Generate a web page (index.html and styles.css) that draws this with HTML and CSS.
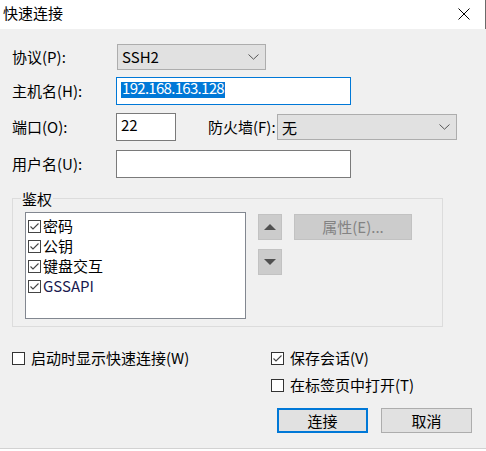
FILE: index.html
```html
<!DOCTYPE html>
<html lang="zh-CN">
<head>
<meta charset="utf-8">
<title>快速连接</title>
<link rel="stylesheet" href="styles.css">
</head>
<body>
<div class="window">
  <div class="titlebar">
    <span class="title">快速连接</span>
    <svg class="close" width="12" height="12" viewBox="0 0 12 12"><path d="M0.5 0.5 L11.5 11.5 M11.5 0.5 L0.5 11.5" stroke="#000" stroke-width="1" fill="none"/></svg>
  </div>
  <div class="content">
    <div class="row r1">
      <span class="lbl">协议(P):</span>
      <div class="combo combo-proto"><span>SSH2</span><svg class="chev" width="11" height="6" viewBox="0 0 11 6"><path d="M0.5 0.5 L5.5 5.2 L10.5 0.5" stroke="#555" stroke-width="1" fill="none"/></svg></div>
    </div>
    <div class="row r2">
      <span class="lbl">主机名(H):</span>
      <div class="edit edit-host"><span class="sel">192.168.163.128</span></div>
    </div>
    <div class="row r3">
      <span class="lbl">端口(O):</span>
      <div class="edit edit-port">22</div>
      <span class="fw-lbl">防火墙(F):</span>
      <div class="combo combo-fw"><span>无</span><svg class="chev" width="11" height="6" viewBox="0 0 11 6"><path d="M0.5 0.5 L5.5 5.2 L10.5 0.5" stroke="#555" stroke-width="1" fill="none"/></svg></div>
    </div>
    <div class="row r4">
      <span class="lbl">用户名(U):</span>
      <div class="edit edit-user"></div>
    </div>
    <fieldset class="group">
      <legend>鉴权</legend>
      <div class="group-body">
        <div class="listbox">
          <div class="item"><svg class="cb" width="13" height="13" viewBox="0 0 13 13"><rect x="0.5" y="0.5" width="12" height="12" fill="#fff" stroke="#444"/><path d="M2.5 6.5 L5 9 L10.5 3.5" stroke="#444" stroke-width="1.1" fill="none"/></svg><span>密码</span></div>
          <div class="item"><svg class="cb" width="13" height="13" viewBox="0 0 13 13"><rect x="0.5" y="0.5" width="12" height="12" fill="#fff" stroke="#444"/><path d="M2.5 6.5 L5 9 L10.5 3.5" stroke="#444" stroke-width="1.1" fill="none"/></svg><span>公钥</span></div>
          <div class="item"><svg class="cb" width="13" height="13" viewBox="0 0 13 13"><rect x="0.5" y="0.5" width="12" height="12" fill="#fff" stroke="#444"/><path d="M2.5 6.5 L5 9 L10.5 3.5" stroke="#444" stroke-width="1.1" fill="none"/></svg><span>键盘交互</span></div>
          <div class="item"><svg class="cb" width="13" height="13" viewBox="0 0 13 13"><rect x="0.5" y="0.5" width="12" height="12" fill="#fff" stroke="#444"/><path d="M2.5 6.5 L5 9 L10.5 3.5" stroke="#444" stroke-width="1.1" fill="none"/></svg><span class="gss">GSSAPI</span></div>
        </div>
        <div class="arrows">
          <div class="sbtn"><svg width="12" height="6" viewBox="0 0 12 6"><polygon points="0,6 6,0 12,6" fill="#505050"/></svg></div>
          <div class="sbtn"><svg width="12" height="6" viewBox="0 0 12 6"><polygon points="0,0 12,0 6,6" fill="#505050"/></svg></div>
        </div>
        <div class="pbtn">属性(E)...</div>
      </div>
    </fieldset>
    <div class="bottom">
      <div class="bottom-left">
        <div class="check"><svg class="cb" width="13" height="13" viewBox="0 0 13 13"><rect x="0.5" y="0.5" width="12" height="12" fill="#fff" stroke="#333"/></svg><span>启动时显示快速连接(W)</span></div>
      </div>
      <div class="bottom-right">
        <div class="check"><svg class="cb" width="13" height="13" viewBox="0 0 13 13"><rect x="0.5" y="0.5" width="12" height="12" fill="#fff" stroke="#333"/><path d="M2.5 6.5 L5 9 L10.5 3.5" stroke="#444" stroke-width="1.1" fill="none"/></svg><span>保存会话(V)</span></div>
        <div class="check"><svg class="cb" width="13" height="13" viewBox="0 0 13 13"><rect x="0.5" y="0.5" width="12" height="12" fill="#fff" stroke="#333"/></svg><span>在标签页中打开(T)</span></div>
        <div class="buttons">
          <div class="btn btn-default">连接</div>
          <div class="btn">取消</div>
        </div>
      </div>
    </div>
  </div>
</div>
</body>
</html>
```
FILE: styles.css
```css
html, body {
  margin: 0;
  padding: 0;
  background: #ffffff;
}
body {
  font-family: "Noto Sans CJK SC", "Noto Sans", sans-serif;
  font-size: 15px;
  color: #000;
}
.window {
  width: 486px;
  height: 449px;
  box-sizing: border-box;
  background: #f0f0f0;
  border-bottom: 1px solid #d2d2d2;
}
.titlebar {
  height: 29px;
  width: 486px;
  box-sizing: border-box;
  background: #fff;
  border-right: 1px solid #6b6b6b;
  display: flex;
  align-items: flex-start;
  padding: 3px 0 0 3px;
}
.title {
  line-height: 20px;
}
.close {
  margin-left: auto;
  margin-right: 15px;
  margin-top: 5px;
  flex: none;
}
.content {
  padding: 0 12px;
}
.row {
  display: flex;
  align-items: center;
}
.r1 { margin-top: 15px; }
.r2 { margin-top: 7px; }
.r3 { margin-top: 8px; }
.r4 { margin-top: 9px; }
.lbl {
  width: 104px;
  flex: none;
  line-height: 20px;
}
.fw-lbl {
  margin-left: 32px;
  width: 69px;
  flex: none;
  line-height: 20px;
}
.combo {
  height: 26px;
  box-sizing: border-box;
  border: 1px solid #adadad;
  background: #e1e1e1;
  display: flex;
  align-items: center;
  justify-content: space-between;
  padding: 0 6px 0 4px;
  line-height: 20px;
  flex: none;
}
.combo-proto {
  width: 149px;
  margin-left: 1px;
}
.combo-fw {
  width: 180px;
}
.combo-fw span {
  padding-top: 2px;
}
.chev {
  flex: none;
}
.edit {
  height: 28px;
  box-sizing: border-box;
  border: 1px solid #7a7a7a;
  background: #fff;
  padding: 1px 4px 0;
  line-height: 20px;
  flex: none;
}
.edit-host {
  width: 235px;
  border-color: #0078d7;
  padding-top: 4px;
}
.edit-port {
  width: 60px;
}
.edit-user {
  width: 235px;
}
.sel {
  display: inline-block;
  vertical-align: top;
  height: 16px;
  line-height: 12px;
  background: #0078d7;
  color: #fff;
  padding: 0 1px;
  letter-spacing: -0.7px;
}
.group {
  margin: 12px 0 0;
  padding: 0;
  border: 1px solid #dcdcdc;
  width: 431px;
  box-sizing: border-box;
  min-width: 0;
}
.group legend {
  margin-left: 8px;
  padding: 0 1px;
  line-height: 17px;
}
.group-body {
  display: flex;
  align-items: flex-start;
  padding: 5px 12px 7px;
}
.listbox {
  width: 221px;
  height: 107px;
  box-sizing: border-box;
  border: 1px solid #828790;
  background: #fff;
  padding: 3px 0 0 2px;
  flex: none;
}
.item {
  display: flex;
  align-items: center;
  gap: 2px;
  height: 20px;
  line-height: 20px;
}
.gss {
  color: #1a1a50;
}
.cb {
  flex: none;
}
.arrows {
  display: flex;
  flex-direction: column;
  gap: 9px;
  margin: 2px 0 0 12px;
}
.sbtn {
  width: 24px;
  height: 26px;
  box-sizing: border-box;
  background: #cccccc;
  border: 1px solid #c2c2c2;
  display: flex;
  align-items: center;
  justify-content: center;
}
.pbtn {
  margin: 2px 0 0 12px;
  width: 118px;
  height: 26px;
  box-sizing: border-box;
  background: #cccccc;
  border: 1px solid #c2c2c2;
  color: #838383;
  display: flex;
  align-items: center;
  justify-content: center;
  line-height: 20px;
}
.bottom {
  display: flex;
  margin-top: 21px;
}
.bottom-left {
  width: 259px;
  flex: none;
}
.check {
  display: flex;
  align-items: center;
  gap: 6px;
  height: 20px;
  line-height: 20px;
}
.check + .check {
  margin-top: 7px;
}
.buttons {
  display: flex;
  gap: 13px;
  margin: 13px 0 0 6px;
}
.btn {
  width: 91px;
  height: 25px;
  box-sizing: border-box;
  border: 1px solid #adadad;
  background: #e1e1e1;
  display: flex;
  align-items: center;
  justify-content: center;
  line-height: 20px;
}
.btn-default {
  border: 2px solid #0078d7;
}
```
